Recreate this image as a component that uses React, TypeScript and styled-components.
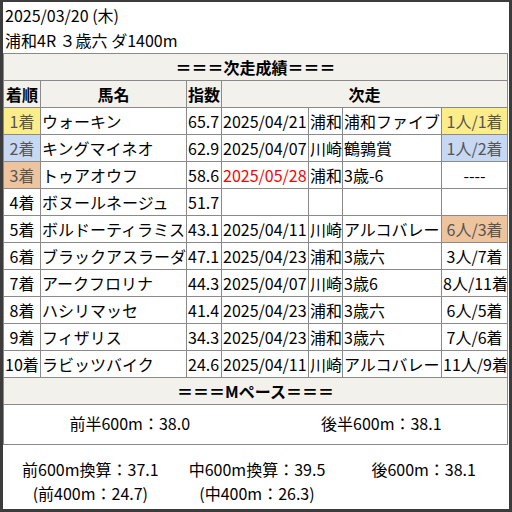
import React from "react";
import styled, { createGlobalStyle } from "styled-components";

const Global = createGlobalStyle`
  html, body { margin: 0; padding: 0; background: #ffffff; }
  body { font-family: "Noto Sans CJK JP", "Noto Sans", sans-serif; color: #000; }
`;

const Frame = styled.div`
  width: 512px;
  height: 512px;
  box-sizing: border-box;
  border: 3px solid #3c3c3c;
  border-top-width: 2px;
  padding-right: 2px;
  background: #fff;
  font-size: 16px;
  overflow: hidden;
`;

const Header = styled.div`
  padding: 1px 0 0 2px;
  line-height: 25px;
  white-space: nowrap;
`;

const Table = styled.table`
  width: 504px;
  border-collapse: collapse;
  table-layout: fixed;
  font-size: 16px;
  line-height: 20px;
`;

const Cell = styled.td<{ $align?: string; $bg?: string; $color?: string; $h?: number }>`
  border: 1px solid #8a8a8a;
  height: ${(p) => p.$h ?? 27}px;
  padding: 0 1px;
  box-sizing: border-box;
  text-align: ${(p) => p.$align ?? "left"};
  background: ${(p) => p.$bg ?? "transparent"};
  color: ${(p) => p.$color ?? "#000"};
  white-space: nowrap;
  overflow: hidden;
  vertical-align: middle;
`;

const HeadCell = styled.th<{ $align?: string }>`
  border: 1px solid #8a8a8a;
  height: 27px;
  box-sizing: border-box;
  padding: 0 1px;
  background: #f2f1ec;
  font-weight: bold;
  text-align: ${(p) => p.$align ?? "center"};
  white-space: nowrap;
`;

const PaceRow = styled.div`
  display: grid;
  grid-template-columns: 1fr 1fr;
  text-align: center;
  height: 39px;
  align-items: center;
  padding-bottom: 3px;
  box-sizing: border-box;
`;

const SplitGrid = styled.div`
  display: grid;
  grid-template-columns: 1fr 1fr 1fr;
  padding: 12px 0 0 4px;
  line-height: 24px;
  text-align: center;
`;

const SplitCol = styled.div`
  display: flex;
  flex-direction: column;
  align-items: center;
`;

type Row = {
  rank: string;
  name: string;
  idx: string;
  date?: string;
  red?: boolean;
  venue?: string;
  race?: string;
  res?: string;
  rankBg?: string;
  resBg?: string;
};

const YEL = "#fdec8a";
const BLU = "#c7d8f3";
const ORG = "#edc49e";

const rows: Row[] = [
  { rank: "1着", name: "ウォーキン", idx: "65.7", date: "2025/04/21", venue: "浦和", race: "浦和ファイブ", res: "1人/1着", rankBg: YEL, resBg: YEL },
  { rank: "2着", name: "キングマイネオ", idx: "62.9", date: "2025/04/07", venue: "川崎", race: "鶴鶉賞", res: "1人/2着", rankBg: BLU, resBg: BLU },
  { rank: "3着", name: "トゥアオウフ", idx: "58.6", date: "2025/05/28", red: true, venue: "浦和", race: "3歳-6", res: "----", rankBg: ORG },
  { rank: "4着", name: "ボヌールネージュ", idx: "51.7" },
  { rank: "5着", name: "ボルドーティラミス", idx: "43.1", date: "2025/04/11", venue: "川崎", race: "アルコバレー", res: "6人/3着", resBg: ORG },
  { rank: "6着", name: "ブラックアスラーダ", idx: "47.1", date: "2025/04/23", venue: "浦和", race: "3歳六", res: "3人/7着" },
  { rank: "7着", name: "アークフロリナ", idx: "44.3", date: "2025/04/07", venue: "川崎", race: "3歳6", res: "8人/11着" },
  { rank: "8着", name: "ハシリマッセ", idx: "41.4", date: "2025/04/23", venue: "浦和", race: "3歳六", res: "6人/5着" },
  { rank: "9着", name: "フィザリス", idx: "34.3", date: "2025/04/23", venue: "浦和", race: "3歳六", res: "7人/6着" },
  { rank: "10着", name: "ラビッツバイク", idx: "24.6", date: "2025/04/11", venue: "川崎", race: "アルコバレー", res: "11人/9着" },
];

const widths = [37, 146, 35, 87, 34, 99, 66];

export default function App() {
  return (
    <>
      <Global />
      <Frame>
        <Header>
          <div>2025/03/20 (木)</div>
          <div>浦和4R ３歳六 ダ1400m</div>
        </Header>
        <Table>
          <colgroup>
            {widths.map((w, i) => (
              <col key={i} style={{ width: w }} />
            ))}
          </colgroup>
          <tbody>
            <tr>
              <HeadCell colSpan={7}>＝＝＝次走成績＝＝＝</HeadCell>
            </tr>
            <tr>
              <HeadCell>着順</HeadCell>
              <HeadCell>馬名</HeadCell>
              <HeadCell>指数</HeadCell>
              <HeadCell colSpan={4}>次走</HeadCell>
            </tr>
            {rows.map((r) => (
              <tr key={r.rank}>
                <Cell $align="center" $bg={r.rankBg} $color={r.rankBg ? "#555" : "#000"}>{r.rank}</Cell>
                <Cell>{r.name}</Cell>
                <Cell>{r.idx}</Cell>
                <Cell $color={r.red ? "#ff0000" : "#000"}>{r.date ?? ""}</Cell>
                <Cell>{r.venue ?? ""}</Cell>
                <Cell>{r.race ?? ""}</Cell>
                <Cell $align="center" $bg={r.resBg} $color={r.resBg ? "#555" : "#000"}>{r.res ?? ""}</Cell>
              </tr>
            ))}
            <tr>
              <HeadCell colSpan={7}>＝＝＝Mペース＝＝＝</HeadCell>
            </tr>
            <tr>
              <Cell colSpan={7} $h={40} style={{ padding: 0 }}>
                <PaceRow>
                  <div>前半600m：38.0</div>
                  <div>後半600m：38.1</div>
                </PaceRow>
              </Cell>
            </tr>
          </tbody>
        </Table>
        <SplitGrid>
          <SplitCol>
            <div>前600m換算：37.1</div>
            <div>(前400m：24.7)</div>
          </SplitCol>
          <SplitCol>
            <div>中600m換算：39.5</div>
            <div>(中400m：26.3)</div>
          </SplitCol>
          <SplitCol>
            <div>後600m：38.1</div>
          </SplitCol>
        </SplitGrid>
      </Frame>
    </>
  );
}
